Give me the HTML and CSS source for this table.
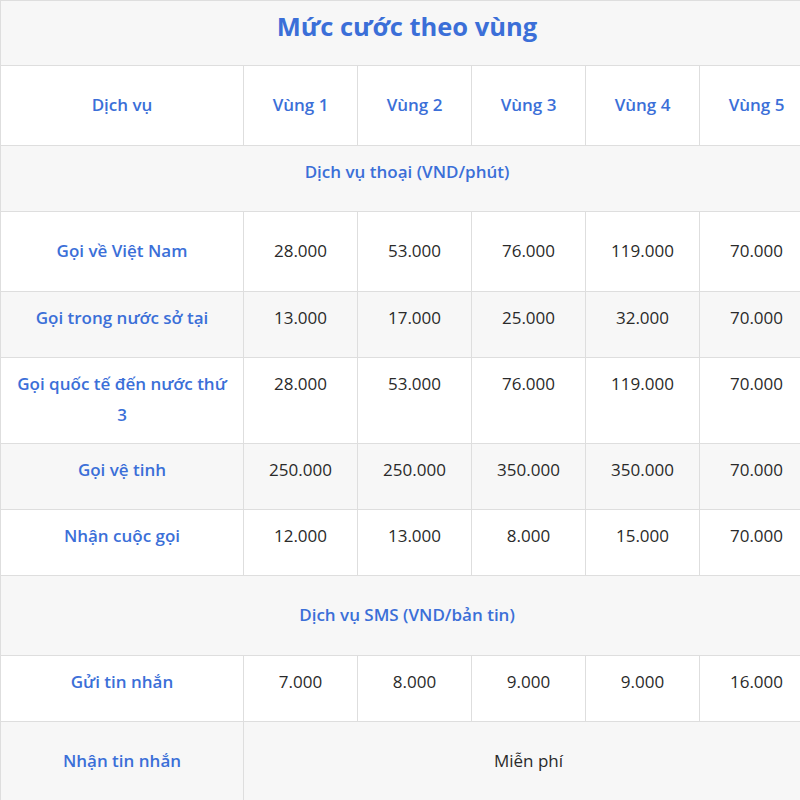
FILE: index.html
```
<!DOCTYPE html>
<html lang="vi">
<head>
<meta charset="utf-8">
<link rel="stylesheet" href="styles.css">
</head>
<body>
<table class="rates">
  <colgroup>
    <col class="c-first"><col class="c-zone"><col class="c-zone"><col class="c-zone"><col class="c-zone"><col class="c-zone">
  </colgroup>
  <tr class="title-row"><th colspan="6" class="title">Mức cước theo vùng</th></tr>
  <tr class="r80 white"><th>Dịch vụ</th><th>Vùng 1</th><th>Vùng 2</th><th>Vùng 3</th><th>Vùng 4</th><th>Vùng 5</th></tr>
  <tr class="r66 gray"><th colspan="6">Dịch vụ thoại (VND/phút)</th></tr>
  <tr class="r80 white"><th>Gọi về Việt Nam</th><td>28.000</td><td>53.000</td><td>76.000</td><td>119.000</td><td>70.000</td></tr>
  <tr class="r66 gray"><th>Gọi trong nước sở tại</th><td>13.000</td><td>17.000</td><td>25.000</td><td>32.000</td><td>70.000</td></tr>
  <tr class="r86 white"><th>Gọi quốc tế đến nước thứ 3</th><td>28.000</td><td>53.000</td><td>76.000</td><td>119.000</td><td>70.000</td></tr>
  <tr class="r66 gray"><th>Gọi vệ tinh</th><td>250.000</td><td>250.000</td><td>350.000</td><td>350.000</td><td>70.000</td></tr>
  <tr class="r66 white"><th>Nhận cuộc gọi</th><td>12.000</td><td>13.000</td><td>8.000</td><td>15.000</td><td>70.000</td></tr>
  <tr class="r80 gray"><th colspan="6">Dịch vụ SMS (VND/bản tin)</th></tr>
  <tr class="r66 white"><th>Gửi tin nhắn</th><td>7.000</td><td>8.000</td><td>9.000</td><td>9.000</td><td>16.000</td></tr>
  <tr class="r80 gray"><th>Nhận tin nhắn</th><td colspan="5">Miễn phí</td></tr>
</table>
</body>
</html>
```
FILE: styles.css
```
html, body {
  margin: 0;
  padding: 0;
  background: #ffffff;
  overflow: hidden;
}
body {
  font-family: "Open Sans", "Noto Sans", sans-serif;
  font-size: 17px;
  color: #333333;
}
.rates {
  border-collapse: collapse;
  width: 813px;
  table-layout: fixed;
}
.c-first { width: 243px; }
.c-zone { width: 114px; }
.rates th, .rates td {
  border: 1px solid #dedede;
  text-align: center;
  vertical-align: top;
  line-height: 31px;
  padding: 0 10px;
}
.rates th {
  color: #3b6fd8;
  font-weight: 600;
}
.rates td {
  color: #2a2a2a;
  font-weight: 400;
}
.title-row { height: 65px; }
.title-row th.title {
  background: #f7f7f7;
  font-size: 25.5px;
  font-weight: 700;
  line-height: 36px;
  padding-top: 7px;
}
.white { background: #ffffff; }
.gray { background: #f7f7f7; }
.r80 { height: 80px; }
.r80 th, .r80 td { padding-top: 23px; }
.r66 { height: 66px; }
.r66 th, .r66 td { padding-top: 10px; }
.r86 { height: 86px; }
.r86 th, .r86 td { padding-top: 10px; }
```
